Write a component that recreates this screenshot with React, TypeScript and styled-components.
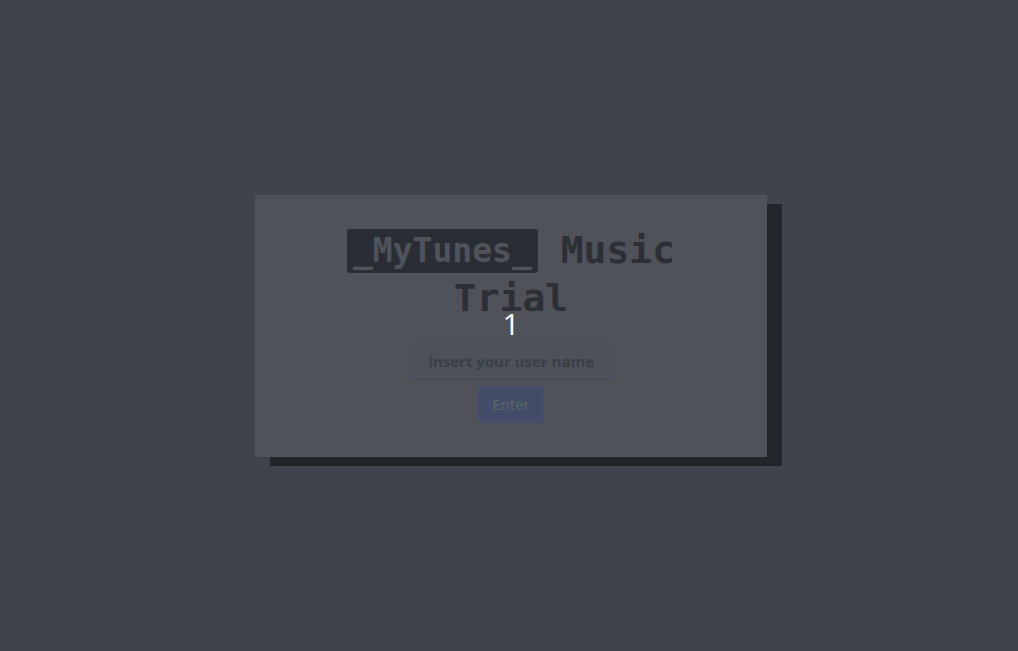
import React from 'react';
import styled, { createGlobalStyle } from 'styled-components';

const GlobalStyle = createGlobalStyle`
  html, body {
    margin: 0;
    padding: 0;
    background: #40434b;
  }
  #root {
    min-height: 100vh;
  }
`;

const Page = styled.div`
  width: 100vw;
  height: 100vh;
  display: flex;
  align-items: center;
  justify-content: center;
`;

const Card = styled.div`
  width: 512px;
  height: 262px;
  margin-left: 4px;
  box-sizing: border-box;
  background: #4f5258;
  box-shadow: 15px 9px 0 #22252a;
  display: flex;
  flex-direction: column;
  align-items: center;
  padding-top: 31px;
`;

const Title = styled.h1`
  margin: 0;
  width: 360px;
  text-align: center;
  font-family: "DejaVu Sans Mono", "Liberation Mono", monospace;
  font-weight: 700;
  font-size: 38px;
  line-height: 48px;
  color: #2c2f36;
`;

const Brand = styled.span`
  display: inline-block;
  background: #2a2d35;
  color: #4f535a;
  font-size: 33px;
  line-height: 44px;
  padding: 0 6px;
  border-radius: 3px;
  vertical-align: 1px;
`;

const Counter = styled.div`
  font-family: "Open Sans", "Noto Sans", sans-serif;
  font-size: 30px;
  line-height: 30px;
  color: #ffffff;
  margin-top: -13px;
`;

const NameInput = styled.input`
  margin-top: 4px;
  width: 205px;
  height: 37px;
  box-sizing: border-box;
  background: #4d515b;
  border: 1px dotted #454a57;
  border-radius: 3px;
  text-align: center;
  font-family: "Open Sans", "Noto Sans", sans-serif;
  font-weight: 700;
  font-size: 15px;
  color: #393d44;
  outline: none;
  &::placeholder {
    color: #3a3e45;
  }
`;

const EnterButton = styled.button`
  margin-top: 6px;
  width: 66px;
  height: 37px;
  background: #434c68;
  border: 1px dotted #4a5670;
  border-radius: 3px;
  font-family: "Open Sans", "Noto Sans", sans-serif;
  font-size: 15px;
  color: #5a6a66;
  cursor: pointer;
`;

export default function App() {
  return (
    <>
      <GlobalStyle />
      <Page>
        <Card>
          <Title>
            <Brand>_MyTunes_</Brand> Music Trial
          </Title>
          <Counter>1</Counter>
          <NameInput placeholder="Insert your user name" />
          <EnterButton>Enter</EnterButton>
        </Card>
      </Page>
    </>
  );
}
